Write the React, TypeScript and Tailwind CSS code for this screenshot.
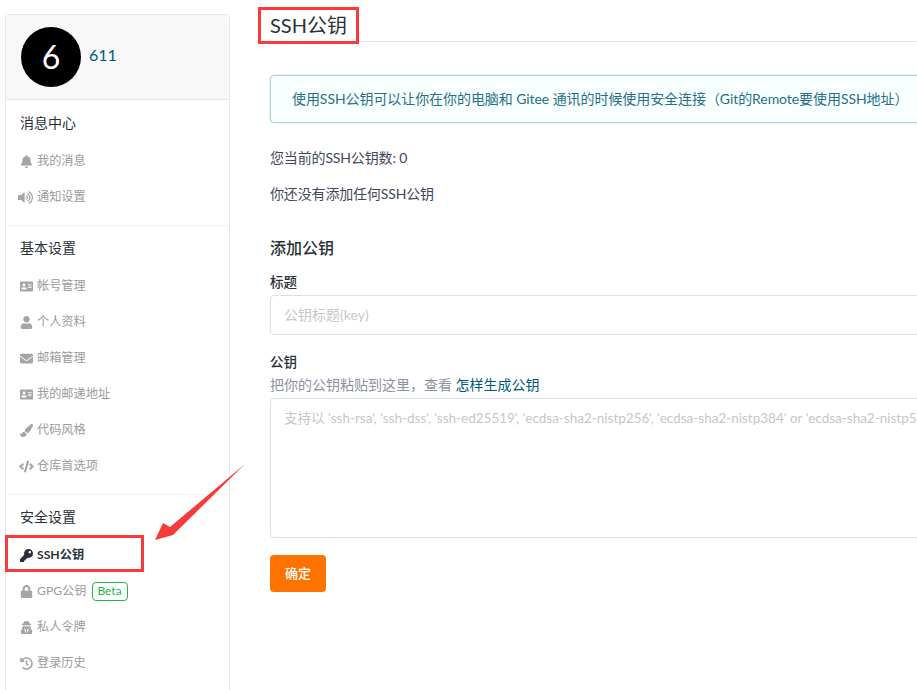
import type { ReactNode } from "react";
import {
  FaBell,
  FaVolumeUp,
  FaAddressCard,
  FaUser,
  FaEnvelope,
  FaPaintBrush,
  FaCode,
  FaKey,
  FaLock,
  FaUserSecret,
  FaHistory,
} from "react-icons/fa";

function NavItem({
  icon,
  label,
  active,
  children,
}: {
  icon: ReactNode;
  label: string;
  active?: boolean;
  children?: ReactNode;
}) {
  return (
    <div
      className={`flex h-9 items-center pl-[13px] text-[12.2px] ${
        active ? "font-bold text-[#2b2f38]" : "text-[#9b9b9b]"
      }`}
    >
      <span className={`flex w-[17px] text-[13px] ${active ? "text-[#2b2f38]" : "text-[#a5a5a5]"}`}>
        {icon}
      </span>
      {label}
      {children}
    </div>
  );
}

function NavGroup({
  title,
  last,
  children,
}: {
  title: string;
  last?: boolean;
  children: ReactNode;
}) {
  return (
    <div className={`mx-px pt-3 ${last ? "" : "border-b border-[#f0f0f0] pb-[10px]"}`}>
      <div className="mb-[10px] h-5 pl-[13px] text-sm leading-5 text-[#2b2f38]">{title}</div>
      {children}
    </div>
  );
}

export default function App() {
  return (
    <div className="relative flex h-[690px] w-[917px] overflow-hidden bg-white font-['Lato','Noto_Sans_CJK_SC',sans-serif]">
      <aside className="ml-[5px] mt-[14px] h-[720px] w-[225px] shrink-0 rounded border border-[#e3e8ed]">
        <div className="mb-px flex h-[85px] items-center gap-2 border-b border-[#e3e8ed] bg-[#f8f8f8] pl-[15px]">
          <div className="flex h-[60px] w-[60px] items-center justify-center rounded-full bg-black pb-px text-[32px] text-white">
            6
          </div>
          <span className="-mt-[5px] text-base text-[#005980]">611</span>
        </div>

        <NavGroup title="消息中心">
          <NavItem icon={<FaBell />} label="我的消息" />
          <NavItem icon={<FaVolumeUp className="-ml-0.5 size-[15px] shrink-0" />} label="通知设置" />
        </NavGroup>

        <NavGroup title="基本设置">
          <NavItem icon={<FaAddressCard />} label="帐号管理" />
          <NavItem icon={<FaUser />} label="个人资料" />
          <NavItem icon={<FaEnvelope />} label="邮箱管理" />
          <NavItem icon={<FaAddressCard />} label="我的邮递地址" />
          <NavItem icon={<FaPaintBrush />} label="代码风格" />
          <NavItem icon={<FaCode className="-ml-px size-[15px] shrink-0" />} label="仓库首选项" />
        </NavGroup>

        <NavGroup title="安全设置" last>
          <NavItem icon={<FaKey />} label="SSH公钥" active />
          <NavItem icon={<FaLock />} label="GPG公钥">
            <span className="ml-[5px] flex h-[19px] w-9 items-center justify-center rounded-sm border border-[#21ba45] text-xs text-[#21ba45]">
              Beta
            </span>
          </NavItem>
          <NavItem icon={<FaUserSecret />} label="私人令牌" />
          <NavItem icon={<FaHistory />} label="登录历史" />
        </NavGroup>
      </aside>

      <main className="ml-[40px] w-[860px] shrink-0 text-sm text-[#40485b]">
        <h1 className="h-[42px] border-b border-[#e3e3e3] pt-[10px] text-[20px] font-normal leading-[30px] text-[#2b2f38]">
          SSH公钥
        </h1>

        <div className="mt-[33px] flex h-[48px] items-center rounded border border-[#a9d5de] bg-[#f8ffff] pl-[21px] tracking-[-0.07px] text-[#276f86] shadow-[0_0_0_1px_rgba(169,213,222,0.25)]">
          使用SSH公钥可以让你在你的电脑和 Gitee 通讯的时候使用安全连接（Git的Remote要使用SSH地址）
        </div>

        <p className="mt-[25px] h-5 leading-5 tracking-[-0.15px]">您当前的SSH公钥数: 0</p>
        <p className="mt-4 h-5 leading-5 tracking-[-0.15px]">你还没有添加任何SSH公钥</p>

        <h2 className="mt-[32px] h-6 text-base font-medium leading-6 text-[#2b2f38]">添加公钥</h2>

        <label className="mt-[13px] block h-[18px] text-[13.5px] font-medium leading-[18px] text-[#2b2f38]">
          标题
        </label>
        <input
          placeholder="公钥标题(key)"
          className="mt-[4px] block h-10 w-full rounded border border-[#dcdfe9] px-[13px] pb-[2px] text-sm outline-none placeholder:text-[#c7c7c7]"
        />

        <label className="mt-[18px] block h-[18px] text-[13.5px] font-medium leading-[18px] text-[#2b2f38]">
          公钥
        </label>
        <div className="mt-[4px] h-5 leading-5 text-[#8c92a4]">
          把你的公钥粘贴到这里，查看 <a className="text-[#005980]">怎样生成公钥</a>
        </div>
        <textarea
          placeholder="支持以 'ssh-rsa', 'ssh-dss', 'ssh-ed25519', 'ecdsa-sha2-nistp256', 'ecdsa-sha2-nistp384' or 'ecdsa-sha2-nistp521' 开头"
          className="mt-[3px] block h-[140px] w-full resize-none rounded border border-[#dcdfe9] px-[13px] py-[9px] text-[13.5px] leading-5 outline-none placeholder:text-[#c7c7c7]"
        />

        <button className="mt-[17px] block h-[37px] w-14 rounded-sm bg-[#fe7300] text-[13px] font-medium text-white">
          确定
        </button>
      </main>

      {/* red annotations drawn over the screenshot */}
      <div className="absolute left-[5px] top-[535px] h-[37px] w-[139px] border-[3px] border-[#f83a3a]" />
      <div className="absolute left-[258px] top-[7px] h-[37px] w-[101px] border-[3px] border-[#f83a3a]" />
      <svg className="absolute left-[150px] top-[460px]" width="100" height="85" viewBox="150 460 100 85">
        <polygon points="155,540 163,523 170,527 245,464 177,531 173,535" fill="#f83a3a" />
      </svg>
    </div>
  );
}
